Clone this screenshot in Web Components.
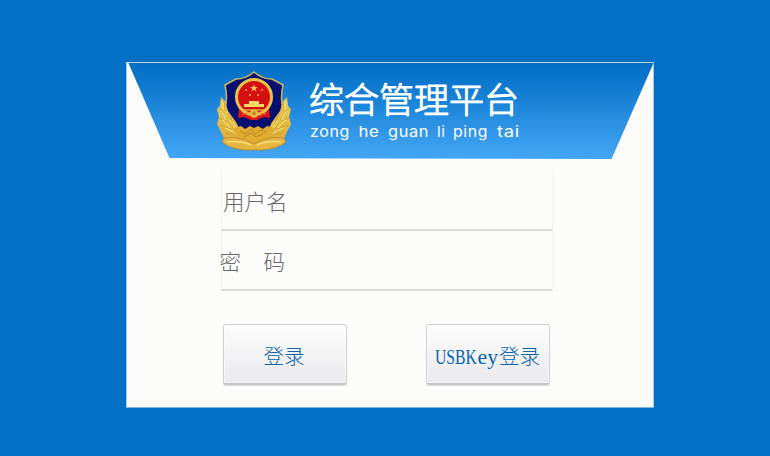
<!DOCTYPE html>
<html lang="zh-CN">
<head>
<meta charset="utf-8">
<title>综合管理平台</title>
<style>
html,body{margin:0;height:100%;overflow:hidden}
body{background:#0370c5;font-family:"Liberation Sans","Noto Sans CJK SC",sans-serif}
</style>
</head>
<body>
<login-page></login-page>
<script>
class Base extends HTMLElement{
  constructor(){super();this.attachShadow({mode:'open'}).innerHTML=this.view();}
}
customElements.define('police-badge',class extends Base{
  view(){
    const wing=`<path d="M4 26L8 30L11 40L19 51L22 57L37 66V70L22 72L7 67L3 59L0 53L2 46L0 38L3 35Z" fill="url(#g)"/>
<path d="M4 27q5 5 4 13M1 37q8 4 9 13M1 46q10 4 13 13M3 54q10 2 18 12M11 42q4 5 5 12M8 62q9 0 17 7" fill="none" stroke="#c39a2c" stroke-width=".8"/>
<path d="M5 30q2 4 1 8M4 40q5 4 5 9M5 49q6 3 8 8M8 57q8 2 12 8M13 49q4 4 6 9" fill="none" stroke="#fbea85" stroke-width="1"/>`;
    return `<style>:host{display:block;width:74px;height:82px}svg{display:block}</style>
<svg width="74" height="82" viewBox="0 0 74 82">
<defs><linearGradient id="g" x2="0" y2="1"><stop stop-color="#e9d060"/><stop offset="1" stop-color="#e0ab34"/></linearGradient></defs>
<path d="M37 1Q45 8 55 8L66 14Q63 27 66 38Q64 52 54 60L37 68L20 60Q10 52 8 38Q11 27 8 14L19 8Q29 8 37 1Z" fill="#07106f" stroke="#cdb65c" stroke-width="1.5"/>
${wing}<g transform="translate(74 0) scale(-1 1)">${wing}</g>
<path d="M17 57L24 55L28 58L33 55L37 57L41 55L46 58L50 55L57 57L55 66L37 74L19 66Z" fill="#dfac31"/>
<path d="M23 60l6 3 5-5 4 5 5-4 7 2M27 66l7-4 5 4 7-3" stroke="#ba8424" fill="none"/>
<path d="M7 67Q18 65 29 69L37 73L45 69Q56 65 67 67L69 71Q61 78 45 79H29Q13 78 5 71Z" fill="#e6b540" stroke="#b9832c" stroke-width=".8"/>
<path d="M10 71Q23 69 34 74M64 71Q51 69 40 74" fill="none" stroke="#f8df78" stroke-width="1.5"/>
<path d="M22 38L21 47L27 46L34 49H40L47 46L53 47L52 38Z" fill="#dc1715"/>
<circle cx="37" cy="26" r="17.500" fill="#d51012" stroke="#e8c34a" stroke-width="3"/>
<path d="M37 13.500l1.100 2.500h2.700l-2.200 1.700.9 2.700-2.500-1.600-2.500 1.600.9-2.700-2.200-1.700h2.700z" fill="#f8ca66"/>
<g fill="#f09a50"><circle cx="29" cy="19" r="1.100"/><circle cx="45" cy="19" r="1.100"/><circle cx="33" cy="24" r="1.100"/><circle cx="41" cy="24" r="1.100"/></g>
<path d="M32 30h10v3h5v3H27v-3h5z" fill="#f8d968"/>
<path d="M27 39h20" stroke="#e2a93a" stroke-width="1.500"/>
<circle cx="37" cy="42.500" r="4.300" fill="#e8ba45"/><circle cx="37" cy="42.500" r="2" fill="#ca8a28"/>
<path d="M25 43l7-1M49 43l-7-1" stroke="#ed8035"/>
</svg>`;}
});
customElements.define('brand-header',class extends Base{
  view(){return `<style>
:host{display:grid;grid-template-columns:528px;height:97px}
svg{display:block}.bg,.row{grid-area:1/1}
.row{display:flex;padding:9px 0 0 91px;z-index:1}
.text{padding-left:19px}
</style>
<svg class="bg" width="528" height="97" viewBox="0 0 528 97">
<defs><linearGradient id="b" x2="0" y2="1"><stop stop-color="#0370c5"/><stop offset=".15" stop-color="#0874ca"/><stop offset=".95" stop-color="#41a4f3"/><stop offset="1" stop-color="#41a4f3"/></linearGradient></defs>
<path d="M2 0H528L485.500 97L43.500 96Z" fill="url(#b)"/><path d="M0 .5H528" stroke="#c3d0da"/>
</svg>
<div class="row"><police-badge></police-badge>
<svg class="text" width="216" height="75" viewBox="0 0 216 75" fill="#fff">
<text x="-1" y="41.500" font-size="35" font-weight="300" font-family="Noto Sans CJK SC,sans-serif" stroke="#fff" stroke-width="1.100" stroke-linejoin="round">综合管理平台</text>
<text y="65.500" font-size="15" font-family="Inter,sans-serif" letter-spacing=".6"><tspan x="0" textLength="40" lengthAdjust="spacingAndGlyphs">zong</tspan> <tspan x="48.500" textLength="21" lengthAdjust="spacingAndGlyphs">he</tspan> <tspan x="78" textLength="41" lengthAdjust="spacingAndGlyphs">guan</tspan> <tspan x="127">li</tspan> <tspan x="143" textLength="35" lengthAdjust="spacingAndGlyphs">ping</tspan> <tspan x="187" textLength="23" lengthAdjust="spacingAndGlyphs">tai</tspan></text>
</svg></div>`;}
});
customElements.define('login-field',class extends Base{
  view(){return `<style>
:host{display:block;box-sizing:border-box;width:332px;height:61px;border:solid #f4f4f3;border-width:0 1px;border-bottom:2px solid #d9d9d8}
svg{display:block;overflow:visible}text{font:300 21.500px "Noto Sans CJK SC",sans-serif;fill:#68686c}
</style><svg width="330" height="59"><text y="${this.getAttribute('y')}" x="${this.getAttribute('x')}" xml:space="preserve">${this.getAttribute('label').replace(' ','<tspan x="41.5">')+(this.getAttribute('label').includes(' ')?'</tspan>':'')}</text></svg>`;}
});
customElements.define('login-button',class extends Base{
  view(){return `<style>
:host{display:block;width:124px;height:61px}
button{display:block;box-sizing:border-box;width:124px;height:61px;padding:0;border:1px solid #cfd0d3;border-bottom:2px solid #c5c6c9;border-radius:3px;background:linear-gradient(#fdfdfd,#e9e9ec);box-shadow:inset 0 0 0 1px #fff8,0 1px 1px #ddd}
svg{display:block}
</style><button><slot></slot></button>`;}
});
customElements.define('login-page',class extends Base{
  view(){return `<style>
:host{display:flex;justify-content:flex-start;padding:62px 0 0 126px}
main{box-sizing:border-box;width:528px;height:345px;background:#fcfcfa;box-shadow:inset 1px 0 #a9cce8,inset -1px 0 #a9cce8,0 1px #7db5e1}
.fields{padding:11px 0 0 95px}login-field+login-field{height:60px}
.fields{height:132px;box-sizing:border-box}
.actions{display:flex;gap:79px;padding:33px 0 0 97px}
svg{display:block}text{font-family:"Noto Sans CJK SC",sans-serif;font-size:20.500px;font-weight:300;fill:#0864ad}
.latin{font-family:"Liberation Serif",serif;font-size:20px;font-weight:400}
</style>
<main><brand-header></brand-header>
<div class="fields"><login-field label="用户名" x="1" y="40"></login-field><login-field label="密 码" x="-2.500" y="39"></login-field></div>
<div class="actions"><login-button><svg width="122" height="58"><text x="39.500" y="39">登录</text></svg></login-button>
<login-button><svg width="122" height="58"><text class="latin" x="8" y="39"><tspan textLength="42" lengthAdjust="spacingAndGlyphs">USBK</tspan><tspan x="50.500" textLength="20.500" lengthAdjust="spacingAndGlyphs">ey</tspan></text><text x="72" y="39">登录</text></svg></login-button></div>
</main>`;}
});
</script>
</body>
</html>
